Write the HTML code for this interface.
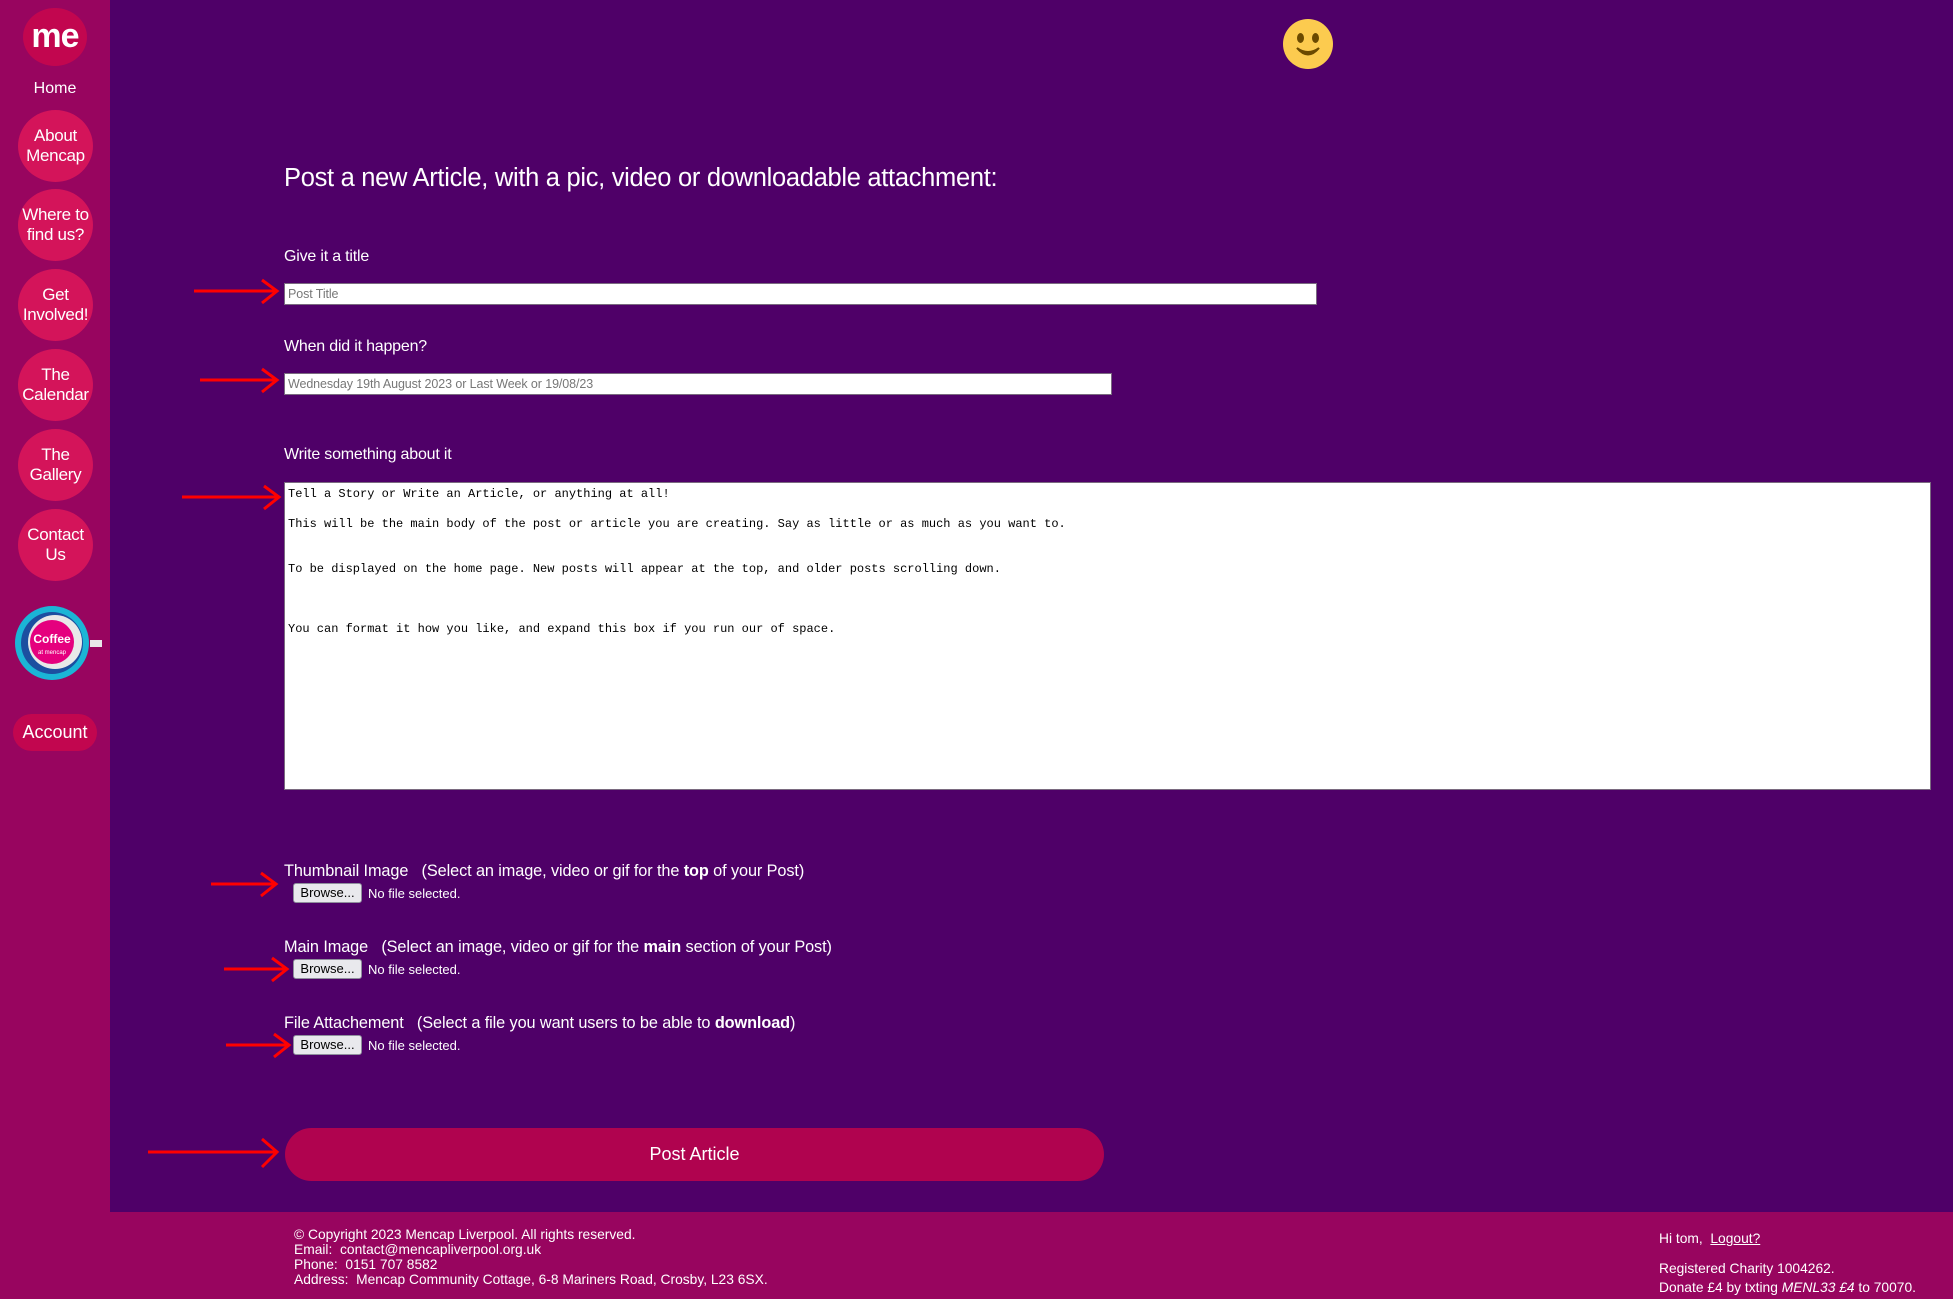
<!DOCTYPE html>
<html><head><meta charset="utf-8"><style>
*{box-sizing:border-box;margin:0;padding:0}
html,body{width:1953px;height:1299px;overflow:hidden;background:#4f0068;font-family:"Liberation Sans",sans-serif;color:#fff}
.side{position:absolute;left:0;top:0;width:110px;height:1299px;background:#98055f}
.circ{position:absolute;left:18px;width:75px;height:72px;border-radius:50%;background:#d4145a;color:#fff;font-size:17px;line-height:20px;text-align:center;display:flex;align-items:center;justify-content:center;letter-spacing:-.3px}
.lbl{position:absolute;left:284px;font-size:16px;letter-spacing:-.2px}
.abs{position:absolute}
.inp{position:absolute;left:284px;background:#fff;border:1px solid #7a6a80;color:#777;font-size:12.5px;padding-left:3px;display:flex;align-items:center;letter-spacing:-.1px}
.fl{position:absolute;left:284px;font-size:16.3px;letter-spacing:-.1px}
.fl b{font-weight:bold}
.br{position:absolute;left:293px;width:69px;height:20px;background:#e9e9ed;border:1px solid #8f8f9d;border-radius:3px;color:#000;font-size:13px;text-align:center;line-height:18px}
.nf{position:absolute;left:368px;font-size:13px}
.foot{position:absolute;left:0;top:1212px;width:1953px;height:87px;background:#98055f}
.ft{position:absolute;font-size:13.8px;line-height:15px;letter-spacing:0}
</style></head><body>
<div class="side">
 <div class="abs" style="left:23px;top:8px;width:64px;height:58px;border-radius:50%;background:#c2064f"></div>
 <div class="abs" style="left:23px;top:16px;width:64px;text-align:center;font-size:34px;font-weight:bold;line-height:40px;letter-spacing:-1px">me</div>
 <div class="abs" style="left:0;top:80px;width:110px;text-align:center;font-size:16px">Home</div>
 <div class="circ" style="top:110px">About<br>Mencap</div>
 <div class="circ" style="top:189px">Where to<br>find us?</div>
 <div class="circ" style="top:269px">Get<br>Involved!</div>
 <div class="circ" style="top:349px">The<br>Calendar</div>
 <div class="circ" style="top:429px">The<br>Gallery</div>
 <div class="circ" style="top:509px">Contact<br>Us</div>
 <svg class="abs" style="left:8px;top:599px" width="96" height="90">
  <circle cx="44" cy="44" r="37" fill="#1bb5d6"/>
  <circle cx="44" cy="44" r="31" fill="#1c4fa0"/>
  <circle cx="47" cy="43" r="27" fill="#e8e8e8"/>
  <rect x="82" y="41" width="12" height="7" fill="#e8e8e8"/>
  <circle cx="44" cy="43" r="22" fill="#e5007e"/>
  <text x="44" y="44" font-size="12" fill="#fff" text-anchor="middle" font-family="Liberation Sans" font-weight="bold">Coffee</text>
  <text x="44" y="55" font-size="6" fill="#fff" text-anchor="middle" font-family="Liberation Sans">at mencap</text>
 </svg>
 <div class="abs" style="left:13px;top:714px;width:84px;height:37px;border-radius:19px;background:#c2064f;text-align:center;line-height:37px;font-size:18px">Account</div>
</div>

<svg class="abs" style="left:1283px;top:19px" width="50" height="50"><circle cx="25" cy="25" r="25" fill="#fccb4f"/><ellipse cx="17.5" cy="19" rx="3.5" ry="5" fill="#6b4a00"/><ellipse cx="32.5" cy="19" rx="3.5" ry="5" fill="#6b4a00"/><path d="M14 29 Q25 37 36 29 Q25 42 14 29Z" fill="#6b4a00" stroke="#6b4a00" stroke-width="2"/></svg>

<div class="abs" style="left:284px;top:164px;font-size:25.5px;letter-spacing:-.3px">Post a new Article, with a pic, video or downloadable attachment:</div>

<div class="lbl" style="top:248px">Give it a title</div>
<div class="inp" style="top:283px;width:1033px;height:22px">Post Title</div>
<div class="lbl" style="top:338px">When did it happen?</div>
<div class="inp" style="top:373px;width:828px;height:22px">Wednesday 19th August 2023 or Last Week or 19/08/23</div>
<div class="lbl" style="top:446px">Write something about it</div>
<div class="abs" style="left:284px;top:482px;width:1647px;height:308px;background:#fff;border:1px solid #7a6a80;color:#000;font-family:'Liberation Mono',monospace;font-size:12px;line-height:15px;padding:4px 3px;white-space:pre">Tell a Story or Write an Article, or anything at all!

This will be the main body of the post or article you are creating. Say as little or as much as you want to.


To be displayed on the home page. New posts will appear at the top, and older posts scrolling down.



You can format it how you like, and expand this box if you run our of space.</div>

<div class="fl" style="top:862px">Thumbnail Image &nbsp; (Select an image, video or gif for the <b>top</b> of your Post)</div>
<div class="br" style="top:883px">Browse...</div><div class="nf" style="top:886px">No file selected.</div>
<div class="fl" style="top:938px">Main Image &nbsp; (Select an image, video or gif for the <b>main</b> section of your Post)</div>
<div class="br" style="top:959px">Browse...</div><div class="nf" style="top:962px">No file selected.</div>
<div class="fl" style="top:1014px">File Attachement &nbsp; (Select a file you want users to be able to <b>download</b>)</div>
<div class="br" style="top:1035px">Browse...</div><div class="nf" style="top:1038px">No file selected.</div>

<div class="abs" style="left:285px;top:1128px;width:819px;height:53px;border-radius:27px;background:#b0034f;text-align:center;line-height:53px;font-size:18px">Post Article</div>

<svg class="abs" style="left:0;top:0" width="300" height="1200" fill="none" stroke="#f00" stroke-width="3">
 <path d="M194 291H276M262 280L277 291L262 303"/>
 <path d="M200 380H276M262 369L277 380L262 392"/>
 <path d="M182 497H278M264 486L279 497L264 509"/>
 <path d="M211 884H275M261 873L276 884L261 896"/>
 <path d="M224 969H286M272 958L287 969L272 981"/>
 <path d="M226 1045H288M274 1034L289 1045L274 1057"/>
 <path d="M148 1152H276M262 1139L277 1152L262 1167"/>
</svg>

<div class="foot">
 <div class="ft" style="left:294px;top:15px">© Copyright 2023 Mencap Liverpool. All rights reserved.<br>Email:&nbsp; contact@mencapliverpool.org.uk<br>Phone:&nbsp; 0151 707 8582<br>Address:&nbsp; Mencap Community Cottage, 6-8 Mariners Road, Crosby, L23 6SX.</div>
 <div class="ft" style="left:1659px;top:19px">Hi tom,&nbsp; <u>Logout?</u></div>
 <div class="ft" style="left:1659px;top:49px">Registered Charity 1004262.</div>
 <div class="ft" style="left:1659px;top:68px">Donate £4 by txting <i>MENL33 £4</i> to 70070.</div>
</div>
</body></html>
